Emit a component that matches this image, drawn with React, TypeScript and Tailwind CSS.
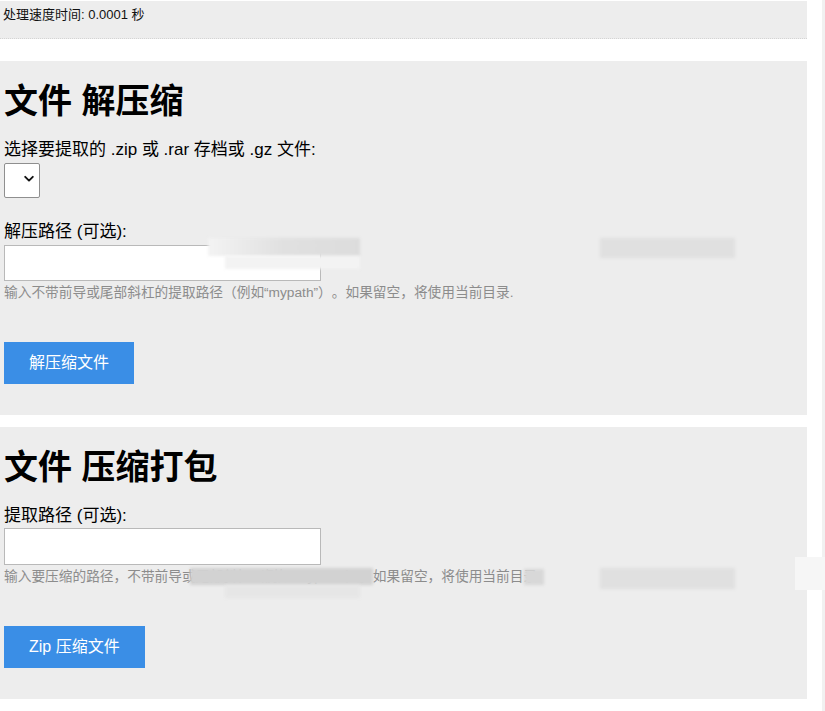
import React from "react";

function Blur({ className }: { className: string }) {
  return <div className={`absolute pointer-events-none blur-[1.5px] ${className}`} />;
}

function Chevron() {
  return (
    <svg
      className="absolute left-[20px] top-[12px] pointer-events-none"
      width="10"
      height="8"
      viewBox="0 0 10 8"
      fill="none"
    >
      <path d="M1.2 1.8 L5 5.6 L8.8 1.8" stroke="#111" strokeWidth="1.9" strokeLinecap="round" strokeLinejoin="round" />
    </svg>
  );
}

export default function App() {
  return (
    <div className="w-[825px] h-[711px] bg-white flex overflow-hidden font-['Liberation_Sans','Noto_Sans_CJK_SC',sans-serif] text-black [text-spacing-trim:space-all]">
      <div className="w-[807px] flex flex-col">
        {/* status panel */}
        <div className="mt-px h-[38px] bg-[#ededed] border-b border-dotted border-[#d4d4d4] pl-[3px] pt-[6px] text-[13px] leading-[16px] text-[#111]">
          处理速度时间: 0.0001 秒
        </div>

        {/* extract panel */}
        <section className="relative mt-[22px] bg-[#ededed] px-[4px] pt-[20px] pb-[31px] flex flex-col items-start">
          <h1 className="text-[34px] leading-[40px] font-bold">文件 解压缩</h1>
          <label className="mt-[19px] text-[17px] leading-[20px]">选择要提取的 .zip 或 .rar 存档或 .gz 文件:</label>
          <div className="relative mt-[3px]">
            <select className="appearance-none w-[36px] h-[35px] bg-white border border-[#8f8f8f] rounded-[2px]" />
            <Chevron />
          </div>
          <label className="mt-[24px] text-[17px] leading-[20px]">解压路径 (可选):</label>
          <input type="text" className="mt-[3px] w-[317px] h-[36px] bg-white border border-[#b9b9b9] outline-none" />
          <p className="mt-[4px] text-[13.7px] leading-[16px] text-[#8c8c8c]">
            输入不带前导或尾部斜杠的提取路径（例如“mypath”）。如果留空，将使用当前目录.
          </p>
          <button className="mt-[41px] h-[42px] px-[25px] bg-[#3a8ee6] text-white text-[16px] leading-[20px]">
            解压缩文件
          </button>

          <Blur className="left-[208px] top-[177px] w-[152px] h-[18px] bg-gradient-to-r from-[#f3f3f3] via-[#e0e0e0] to-[#dcdcdc]" />
          <Blur className="left-[225px] top-[195px] w-[135px] h-[13px] bg-[#f3f3f3]" />
          <Blur className="left-[600px] top-[177px] w-[135px] h-[20px] bg-[#e0e0e0]" />
        </section>

        {/* compress panel */}
        <section className="relative mt-[12px] bg-[#ededed] px-[4px] pt-[20px] pb-[31px] flex flex-col items-start">
          <h1 className="text-[34px] leading-[40px] font-bold">文件 压缩打包</h1>
          <label className="mt-[19px] text-[17px] leading-[20px]">提取路径 (可选):</label>
          <input type="text" className="mt-[2px] w-[317px] h-[37px] bg-white border border-[#b9b9b9] outline-none" />
          <p className="mt-[4px] text-[13.7px] leading-[16px] text-[#8c8c8c]">
            输入要压缩的路径，不带前导或尾部斜杠（例如“mypath”）。如果留空，将使用当前目录.
          </p>
          <button className="mt-[41px] h-[42px] px-[25px] bg-[#3a8ee6] text-white text-[16px] leading-[20px]">
            Zip 压缩文件
          </button>

          <Blur className="left-[190px] top-[141px] w-[183px] h-[17px] bg-[#d2d2d2]" />
          <Blur className="left-[225px] top-[158px] w-[135px] h-[13px] bg-[#e6e6e6]" />
          <Blur className="left-[524px] top-[142px] w-[20px] h-[16px] bg-[#d8d8d8]" />
          <Blur className="left-[600px] top-[141px] w-[135px] h-[21px] bg-[#e0e0e0]" />
        </section>
      </div>
      <div className="relative ml-[15px] w-[3px] h-full bg-[#f1f1f1]">
        <div className="absolute right-0 top-[557px] w-[30px] h-[33px] bg-[#f6f6f6]" />
      </div>
    </div>
  );
}
